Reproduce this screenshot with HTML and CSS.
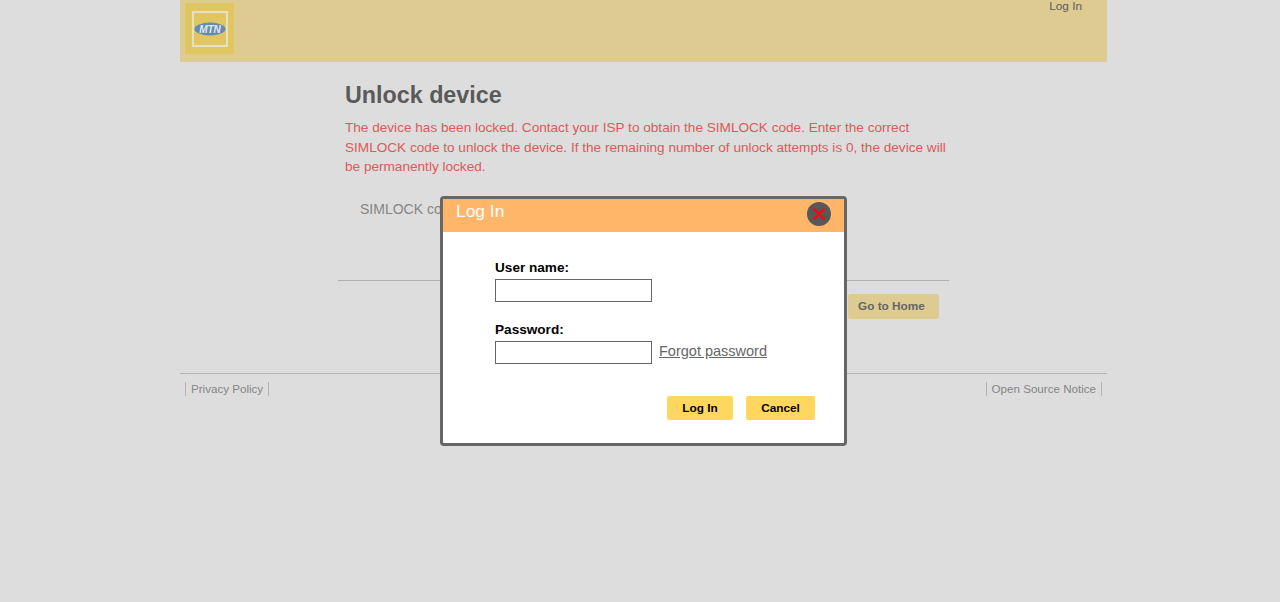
FILE: index.html
```html
<!DOCTYPE html>
<html>
  <head>
    <meta charset="utf-8" />
    <link rel="stylesheet" href="styles.css">
  </head>
  <body>
    <div class="page">
      <div class="header">
        <div class="logo">
          <div class="logo-frame">
            <svg class="logo-mark" width="32" height="14" viewBox="0 0 32 14">
              <ellipse cx="16" cy="7" rx="15.5" ry="6.5" fill="#5f8db5" />
              <text x="16" y="10.5" text-anchor="middle" class="logo-text">MTN</text>
            </svg>
          </div>
        </div>
        <a class="login-link">Log In</a>
      </div>

      <div class="content">
        <h1 class="title">Unlock device</h1>
        <p class="warning">The device has been locked. Contact your ISP to obtain the SIMLOCK code. Enter the correct SIMLOCK code to unlock the device. If the remaining number of unlock attempts is 0, the device will be permanently locked.</p>
        <div class="simlock-row">SIMLOCK code:</div>
        <div class="actions">
          <a class="home-btn">Go to Home</a>
        </div>
      </div>

      <div class="footer">
        <a class="footer-link">Privacy Policy</a>
        <a class="footer-link">Open Source Notice</a>
      </div>
    </div>

    <!-- Login dialog -->
    <div class="dialog">
      <div class="dialog-head">
        <span class="dialog-title">Log In</span>
        <span class="dialog-close">
          <svg width="16" height="16" viewBox="0 0 16 16">
            <path d="M2.5 2.5 L13.5 13.5 M13.5 2.5 L2.5 13.5" stroke="#ff0010" stroke-width="2.4" fill="none" />
          </svg>
        </span>
      </div>
      <div class="dialog-body">
        <label class="field-label">User name:</label>
        <input class="field-input" type="text" />
        <label class="field-label field-label-second">Password:</label>
        <div class="password-row">
          <input class="field-input" type="password" />
          <a class="forgot-link">Forgot password</a>
        </div>
        <div class="dialog-buttons">
          <button class="btn btn-login">Log In</button>
          <button class="btn btn-cancel">Cancel</button>
        </div>
      </div>
    </div>
  </body>
</html>
```

FILE: styles.css
```css
* {
  margin: 0;
  padding: 0;
  box-sizing: border-box;
}

body {
  background: #dddddd;
  font-family: "Liberation Sans", Arial, sans-serif;
  height: 602px;
  overflow: hidden;
  position: relative;
}

.page {
  width: 927px;
  margin-left: 180px;
}

.header {
  height: 62px;
  background: #decb91;
  display: flex;
  justify-content: space-between;
  align-items: flex-start;
  padding: 3px 25px 0 5px;
}

.logo {
  width: 49px;
  height: 51px;
  background: #e0c660;
  display: flex;
  align-items: center;
  justify-content: center;
}

.logo-frame {
  width: 36px;
  height: 36px;
  border: 2px solid #e6e0c4;
  display: flex;
  align-items: center;
  justify-content: center;
}

.logo-mark {
  display: block;
  flex: none;
}

.logo-text {
  font-size: 10px;
  font-weight: bold;
  font-style: italic;
  fill: #e6e6e6;
}

.login-link {
  font-size: 11.8px;
  line-height: 14px;
  color: #5c5c5c;
  margin-top: -4px;
}

.content {
  width: 611px;
  margin-left: 158px;
  height: 311px;
  padding-top: 19px;
}

.title {
  font-size: 23.3px;
  line-height: 28px;
  font-weight: bold;
  color: #5a5a5a;
  margin-left: 7px;
}

.warning {
  width: 606px;
  margin: 9px 0 0 7px;
  font-size: 13.6px;
  line-height: 19.5px;
  color: #dc5a5a;
}

.simlock-row {
  font-size: 14px;
  line-height: 18px;
  color: #858585;
  margin: 23px 0 0 22px;
  height: 80px;
}

.actions {
  border-top: 1px solid #b0b0b0;
  display: flex;
  justify-content: flex-end;
  padding: 13px 10px 0 0;
}

.home-btn {
  width: 91px;
  height: 25px;
  padding-left: 10px;
  background: #decb91;
  border-radius: 2px;
  font-size: 11.8px;
  font-weight: bold;
  line-height: 24px;
  color: #666;
}

.footer {
  border-top: 1px solid #b4b4b4;
  display: flex;
  justify-content: space-between;
  padding: 8px 5px 0 5px;
}

.footer-link {
  font-size: 11.6px;
  line-height: 14px;
  color: #858585;
  padding: 0 5px;
  border-left: 1px solid #b4b4b4;
  border-right: 1px solid #b4b4b4;
}

/* Login dialog */
.dialog {
  position: absolute;
  left: 440px;
  top: 196px;
  width: 407px;
  height: 250px;
  background: #fff;
  border: 3px solid #666;
  border-radius: 4px;
}

.dialog-head {
  height: 33px;
  background: #ffb668;
  display: flex;
  justify-content: space-between;
  padding: 0 13px 0 13px;
}

.dialog-title {
  font-size: 17.4px;
  line-height: 25px;
  color: #fff;
}

.dialog-close {
  width: 24px;
  height: 24px;
  margin-top: 3px;
  border-radius: 50%;
  background: #585858;
  display: flex;
  align-items: center;
  justify-content: center;
}

.dialog-body {
  padding: 28px 0 0 52px;
}

.field-label {
  display: block;
  font-size: 13.6px;
  font-weight: bold;
  line-height: 16px;
  color: #000;
  margin-bottom: 3px;
}

.field-label-second {
  margin-top: 20px;
}

.field-input {
  display: block;
  width: 157px;
  height: 23px;
  border: 1px solid #666;
  background: #fff;
}

.password-row {
  display: flex;
  align-items: center;
  gap: 7px;
}

.forgot-link {
  font-size: 14.5px;
  line-height: 16px;
  color: #666;
  text-decoration: underline;
  margin-bottom: 4px;
}

.dialog-buttons {
  display: flex;
  gap: 13px;
  margin: 32px 0 0 172px;
}

.btn {
  height: 24px;
  border: 0;
  border-radius: 2px;
  background: #ffd75e;
  font-family: "Liberation Sans", Arial, sans-serif;
  font-size: 11.8px;
  font-weight: bold;
  color: #000;
}

.btn-login {
  width: 66px;
}

.btn-cancel {
  width: 69px;
}
```
